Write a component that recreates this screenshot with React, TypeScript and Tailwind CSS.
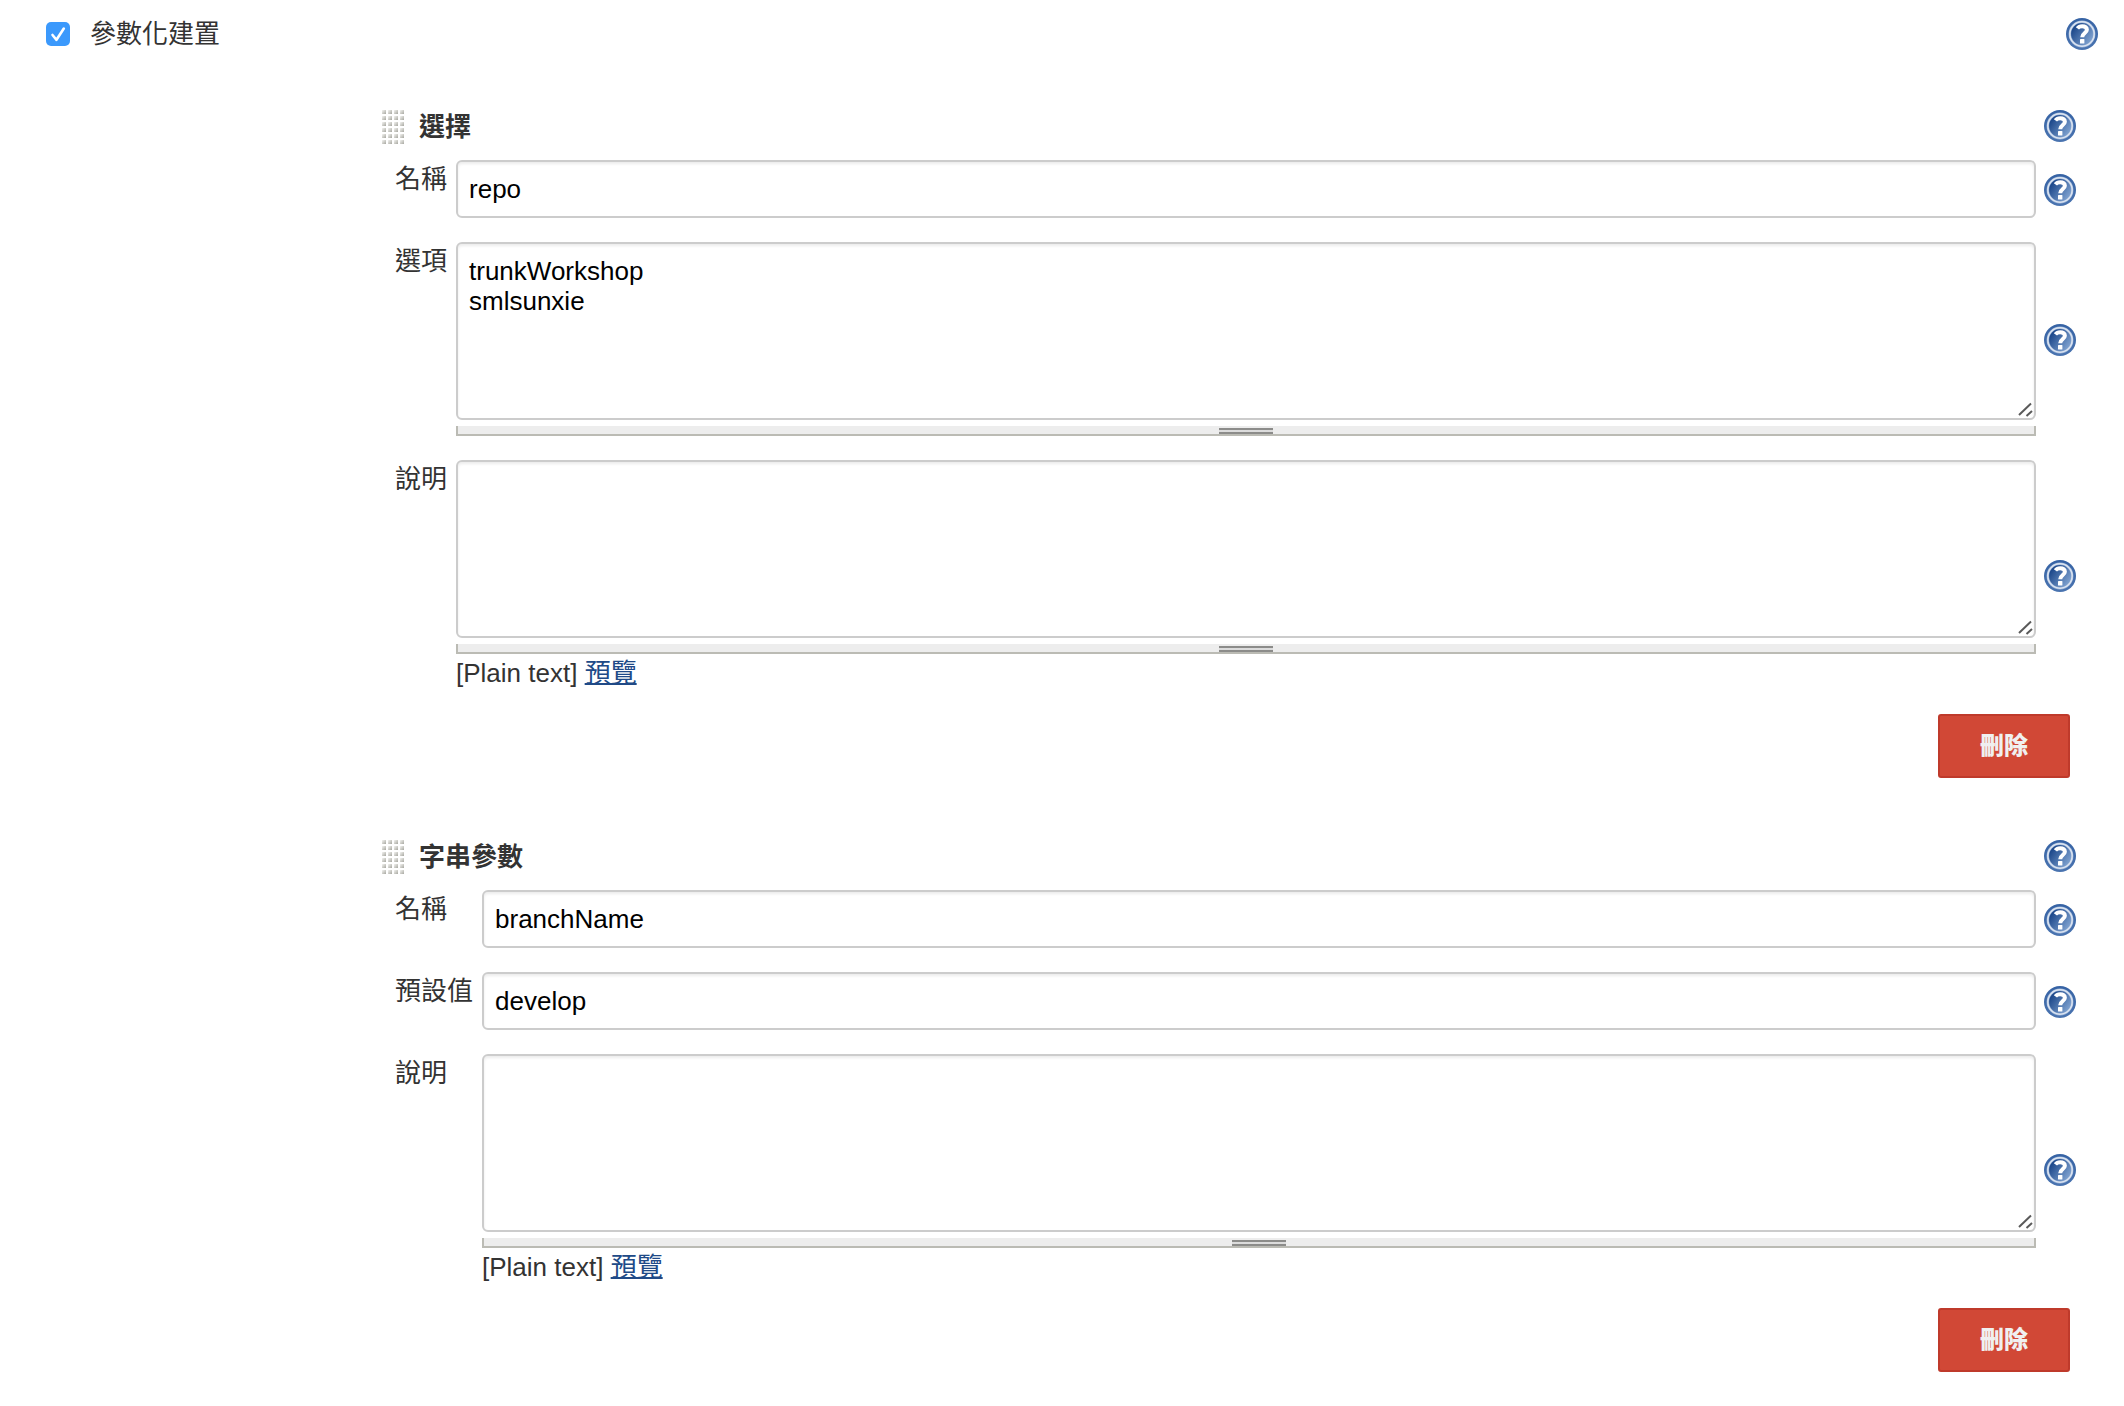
import React from "react";

function HelpIcon() {
  return (
    <svg viewBox="0 0 32 32" className="block size-8" aria-hidden="true">
      <defs>
        <linearGradient id="helpFill" x1="0" y1="0.1" x2="1" y2="0.8">
          <stop offset="0.15" stopColor="#1f4a8c" />
          <stop offset="1" stopColor="#83a6d3" />
        </linearGradient>
        <linearGradient id="helpRim" x1="0" y1="0" x2="0" y2="1">
          <stop offset="0" stopColor="#3562a4" />
          <stop offset="1" stopColor="#4a74b0" />
        </linearGradient>
      </defs>
      <circle cx="16" cy="16" r="16" fill="url(#helpRim)" />
      <circle cx="16" cy="16" r="13.4" fill="#9db5d8" />
      <circle cx="16" cy="16" r="12.9" fill="#dbe4f1" />
      <circle cx="16" cy="16" r="11.4" fill="#8aa6cf" />
      <circle cx="16" cy="16" r="10.9" fill="url(#helpFill)" />
      <path
        d="M11.400 10.400C12.600 8.800 14.200 8.200 16.200 8.200c2.800 0 4.700 1.400 4.700 3.600 0 3.200-4.700 3.300-4.700 7.400"
        fill="none"
        stroke="#fff"
        strokeWidth="4"
      />
      <rect x="14" y="21" width="4.400" height="4.400" rx="0.500" fill="#fff" />
    </svg>
  );
}

function HelpButton({ topic }: { topic: string }) {
  return (
    <button type="button" aria-label={`${topic} 說明`} className="size-8 shrink-0 rounded-full">
      <HelpIcon />
    </button>
  );
}

function DragHandle() {
  return (
    <svg viewBox="0 0 22 34" className="h-[34px] w-[22px] shrink-0" aria-hidden="true">
      <defs>
        <linearGradient id="dotFill" x1="0" y1="0" x2="1" y2="1">
          <stop offset="0" stopColor="#f4f4f2" />
          <stop offset="0.5" stopColor="#cfcfca" />
          <stop offset="1" stopColor="#a6a69f" />
        </linearGradient>
      </defs>
      {[0, 6, 12, 18, 24, 30].map((y) =>
        [0, 6, 12, 18].map((x) => <rect key={`${x}-${y}`} x={x} y={y} width="4" height="4" fill="url(#dotFill)" />),
      )}
    </svg>
  );
}

const fieldBox =
  "block w-full rounded-[6px] border-2 border-[#ccc] bg-white px-[11px] text-[26px] leading-[30px] text-black shadow-[inset_0_2px_3px_rgba(0,0,0,0.08)] outline-none";

type Field = { id: string; label: string; kind: "text" | "area" | "preview"; value?: string };

function ResizableArea({ field }: { field: Field }) {
  return (
    <>
      <div className="relative">
        <textarea id={field.id} defaultValue={field.value} className={`${fieldBox} h-[178px] resize-none py-3`} />
        <svg viewBox="0 0 16 16" className="pointer-events-none absolute right-[3px] bottom-[3px] size-4" aria-hidden="true">
          <path d="M2 14 14 2.500M9.500 15 15 10" stroke="#5a5a5a" strokeWidth="2" fill="none" />
        </svg>
      </div>
      <div className="mt-1.5 flex h-2.5 justify-center border-x-2 border-b-2 border-[#bbbbb4] bg-[#ededed]">
        <div className="mt-0.5 h-1.5 w-[54px] border-y-2 border-[#8c8c8a] bg-[#dcdcdc]" />
      </div>
    </>
  );
}

function FieldRow({ field }: { field: Field }) {
  return (
    <>
      <label htmlFor={field.id} className="pr-px leading-[38px] whitespace-nowrap">
        {field.label}
      </label>
      <div className={field.kind === "preview" ? "" : "pb-0.5"}>
        {field.kind === "text" ? (
          <input id={field.id} type="text" defaultValue={field.value} className={`${fieldBox} h-[58px]`} />
        ) : (
          <ResizableArea field={field} />
        )}
        {field.kind === "preview" && (
          <div className="h-[38px] leading-[38px]">
            [Plain text]{" "}
            <a href="#preview" className="text-[#204a87] underline decoration-2">
              預覽
            </a>
          </div>
        )}
      </div>
      <div className="flex items-center">
        <HelpButton topic={field.label} />
      </div>
    </>
  );
}

function ParameterGroup({ title, fields }: { title: string; fields: Field[] }) {
  return (
    <section>
      <header className="flex h-[34px] items-start">
        <DragHandle />
        <h2 className="ml-[15px] flex-1 leading-[34px] font-bold">{title}</h2>
        <HelpButton topic={title} />
      </header>
      <div className="mt-4 ml-[13px] grid grid-cols-[auto_1fr_auto] gap-x-2 gap-y-[22px]">
        {fields.map((field) => (
          <FieldRow key={field.id} field={field} />
        ))}
      </div>
      <div className="mt-[22px] mr-1.5 flex justify-end">
        <button
          type="button"
          className="h-16 w-[132px] rounded-[3px] border-2 border-[#bf3a2b] bg-[#d14836] text-[24px] font-black text-[#f0f0f0]"
        >
          刪除
        </button>
      </div>
    </section>
  );
}

const groups: { title: string; fields: Field[] }[] = [
  {
    title: "選擇",
    fields: [
      { id: "choice-name", label: "名稱", kind: "text", value: "repo" },
      { id: "choice-options", label: "選項", kind: "area", value: "trunkWorkshop\nsmlsunxie" },
      { id: "choice-description", label: "說明", kind: "preview" },
    ],
  },
  {
    title: "字串參數",
    fields: [
      { id: "string-name", label: "名稱", kind: "text", value: "branchName" },
      { id: "string-default", label: "預設值", kind: "text", value: "develop" },
      { id: "string-description", label: "說明", kind: "preview" },
    ],
  },
];

export default function App() {
  return (
    <main className="min-h-screen bg-white pb-8 font-['Liberation_Sans','Noto_Sans_CJK_TC',sans-serif] text-[26px] text-[#333]">
      <div className="flex items-center justify-between pt-[18px] pr-[26px] pl-[46px]">
        <label className="flex items-center leading-8">
          <span className="relative block size-6">
            <input
              type="checkbox"
              defaultChecked
              className="peer block size-6 appearance-none rounded-[5px] bg-[#3b99fc]/40 checked:bg-[#3b99fc]"
            />
            <svg
              viewBox="0 0 24 24"
              className="pointer-events-none absolute inset-0 hidden size-6 peer-checked:block"
              aria-hidden="true"
            >
              <path
                d="M6.500 13 10.500 17.800 17.800 6.500"
                fill="none"
                stroke="#fff"
                strokeWidth="2.600"
                strokeLinecap="round"
                strokeLinejoin="round"
              />
            </svg>
          </span>
          <span className="ml-5">參數化建置</span>
        </label>
        <HelpButton topic="參數化建置" />
      </div>
      <div className="mt-[60px] flex flex-col gap-[62px] pr-12 pl-[382px]">
        {groups.map((group) => (
          <ParameterGroup key={group.title} title={group.title} fields={group.fields} />
        ))}
      </div>
    </main>
  );
}
